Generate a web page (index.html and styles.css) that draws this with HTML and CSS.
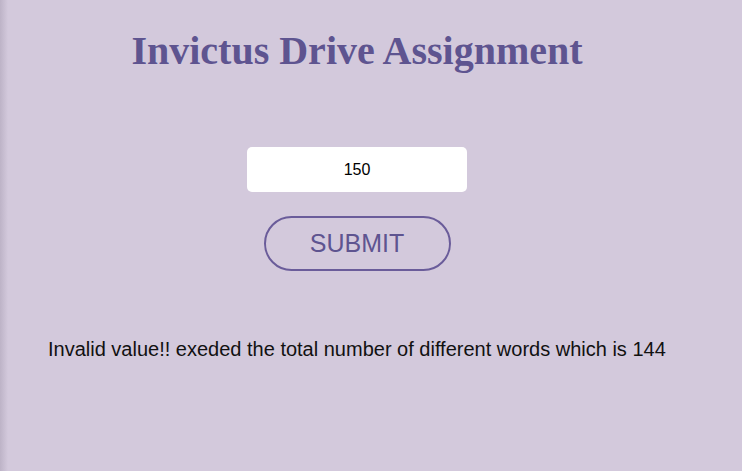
FILE: index.html
```html
<!DOCTYPE html>
<html>
<head>
<meta charset="utf-8">
<link rel="stylesheet" href="styles.css">
</head>
<body>
<div class="edge"></div>
<main class="app">
  <h1 class="title">Invictus Drive Assignment</h1>
  <form class="form">
    <input class="num" type="text" value="150">
    <button class="submit" type="button">SUBMIT</button>
  </form>
  <p class="msg">Invalid value!! exeded the total number of different words which is 144</p>
</main>
</body>
</html>
```
FILE: styles.css
```css
html, body {
  margin: 0;
  padding: 0;
  height: 100%;
}
body {
  background: #d3c9dc;
  font-family: "Liberation Sans", Arial, sans-serif;
  position: relative;
  overflow: hidden;
}
.edge {
  position: absolute;
  left: 0;
  top: 0;
  bottom: 0;
  width: 8px;
  background: linear-gradient(to right, #bdb3c7, #d3c9dc);
}
.app {
  width: 714px;
  display: flex;
  flex-direction: column;
  align-items: center;
}
.title {
  font-family: "Liberation Serif", "Times New Roman", serif;
  font-weight: bold;
  font-size: 40px;
  color: #5e5490;
  margin: 26px 0 0;
  line-height: 50px;
}
.form {
  display: flex;
  flex-direction: column;
  align-items: center;
  margin-top: 71px;
}
.num {
  width: 220px;
  height: 45px;
  box-sizing: border-box;
  border: none;
  border-radius: 5px;
  background: #ffffff;
  text-align: center;
  font-family: "Liberation Sans", Arial, sans-serif;
  font-size: 16px;
  color: #000;
  outline: none;
  padding: 0;
}
.submit {
  margin-top: 24px;
  width: 187px;
  height: 55px;
  box-sizing: border-box;
  border: 2px solid #6a5c9a;
  border-radius: 28px;
  background: transparent;
  color: #5e5490;
  font-family: "Liberation Sans", Arial, sans-serif;
  font-size: 25px;
  padding: 0;
}
.msg {
  align-self: flex-start;
  margin: 66px 0 0 48px;
  font-size: 20px;
  color: #111;
  line-height: 24px;
}
```
